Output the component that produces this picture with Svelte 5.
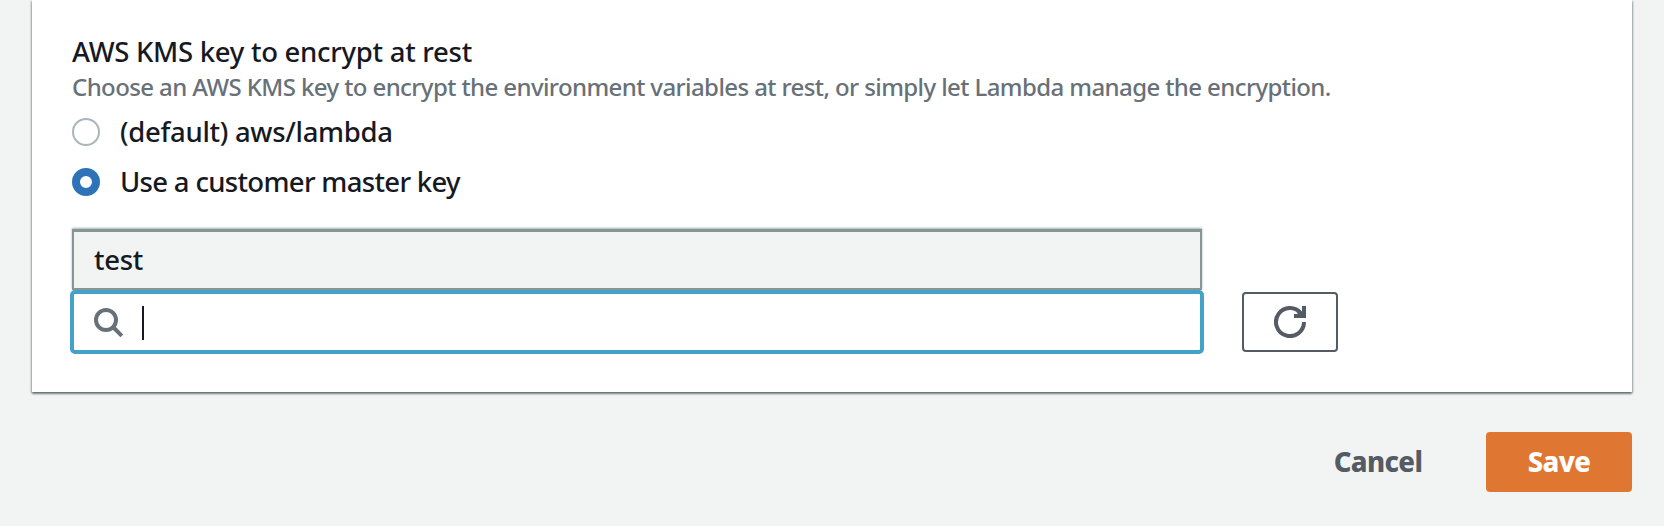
<script>
  let selected = $state('custom');
  const options = [
    { id: 'default', label: '(default) aws/lambda' },
    { id: 'custom', label: 'Use a customer master key' }
  ];
</script>

<div class="page">
  <section class="card">
    <h2>AWS KMS key to encrypt at rest</h2>
    <p>Choose an AWS KMS key to encrypt the environment variables at rest, or simply let Lambda manage the encryption.</p>
    <div class="options" role="radiogroup">
      {#each options as o}
        <div class="option" role="radio" tabindex="-1" aria-checked={selected === o.id} onclick={() => (selected = o.id)} onkeydown={() => {}}>
          <span class="dot" class:on={selected === o.id}></span>
          <span class="label" class:custom={o.id === 'custom'}>{o.label}</span>
        </div>
      {/each}
    </div>
    <div class="picker">
      <div class="combo">
        <div class="result">test</div>
        <div class="search">
          <svg width="30" height="30" viewBox="0 0 30 30" fill="none" stroke="#687078" stroke-width="4">
            <circle cx="12" cy="12" r="10" /><path d="M19 19L27.8 27.8" />
          </svg>
          <span class="caret"></span>
        </div>
      </div>
      <button class="refresh" aria-label="Refresh">
        <svg width="32" height="32" viewBox="0 0 32 32" fill="none" stroke="#545b64" stroke-width="4">
          <path d="M30 16A14 14 0 1 1 27 7.4L29 10" /><path d="M30 0V10H20" /><path d="M24 5L29 10" />
        </svg>
      </button>
    </div>
  </section>
  <footer>
    <button class="cancel">Cancel</button>
    <button class="save">Save</button>
  </footer>
</div>

<style>
  :global(body) { background: #f2f4f3; }
  .page {
    height: 526px; box-sizing: border-box; padding: 0 32px; overflow: hidden;
    background: #f2f4f3; color: #16191f;
    font: 500 27.5px/36px "Noto Sans", sans-serif;
  }
  .card {
    height: 392px; box-sizing: border-box; padding: 34px 40px 0; background: #fff;
    box-shadow: 0 2px 2px rgba(0, 28, 36, 0.4), 1px 1px 2px rgba(0, 28, 36, 0.25), -1px 1px 2px rgba(0, 28, 36, 0.25);
  }
  h2, p { margin: 0; font-weight: 500; white-space: nowrap; }
  h2 { font-size: 27.5px; line-height: 36px; letter-spacing: -0.28px; }
  p { font-size: 24px; line-height: 34px; letter-spacing: -0.6px; color: #687078; }
  .options { display: flex; flex-direction: column; gap: 14px; padding-top: 10px; }
  .option { display: flex; align-items: center; gap: 20px; height: 36px; }
  .label { white-space: nowrap; letter-spacing: -0.3px; }
  .label.custom { letter-spacing: -0.68px; }
  .dot { box-sizing: border-box; width: 28px; height: 28px; border: 2px solid #aab7b8; border-radius: 50%; background: #fff; }
  .dot.on { border: 8px solid #2e73b8; }
  .picker { display: flex; align-items: flex-end; gap: 38px; margin: 29px 0 0 -2px; }
  .combo { width: 1134px; }
  .result {
    box-sizing: border-box; height: 61px; margin: 0 2px; padding: 10px 20px 0; letter-spacing: -0.3px;
    background: #f2f4f3; border: 2px solid #879596; border-top-width: 3px;
    box-shadow: 0 -1px 2px rgba(0, 28, 36, 0.35);
  }
  .search {
    box-sizing: border-box; display: flex; align-items: center; height: 64px; padding: 2px 20px 0; gap: 18px;
    border: 4px solid #44a1c8; border-radius: 5px; background: #fff;
  }
  .caret { width: 2px; height: 34px; background: #16191f; }
  button { font: inherit; cursor: pointer; }
  .refresh {
    box-sizing: border-box; width: 96px; height: 60px; padding: 0; margin-bottom: 2px;
    display: grid; place-items: center; border: 2px solid #545b64; border-radius: 4px; background: #fff;
  }
  footer { display: flex; justify-content: flex-end; padding-top: 40px; gap: 24px; }
  .cancel, .save { height: 60px; padding: 0; border: 0; border-radius: 4px; font-weight: 800; letter-spacing: -0.6px; }
  .cancel { width: 168px; color: #545b64; background: transparent; }
  .save { width: 146px; color: #fff; background: #df7732; }
</style>
